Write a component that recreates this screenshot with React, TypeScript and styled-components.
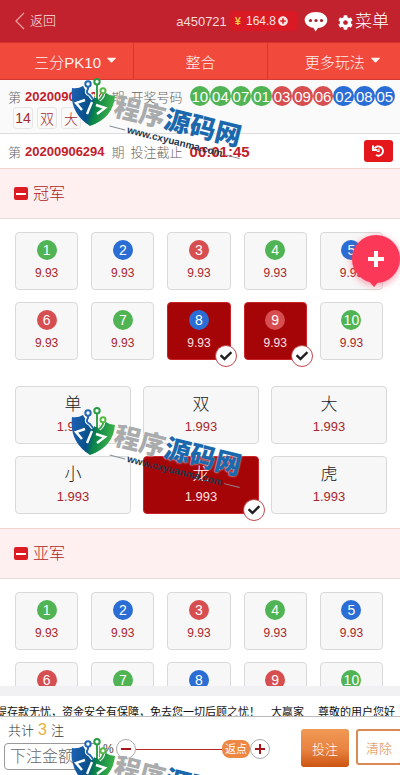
import React, { useState } from "react";
import styled, { createGlobalStyle, css } from "styled-components";
import { FaCog, FaPlusCircle, FaCheck, FaCaretDown } from "react-icons/fa";

const GlobalStyle = createGlobalStyle`
  * { box-sizing: border-box; }
  body { margin: 0; background: #fff; }
  body, button, input { font-family: "Liberation Sans", "Noto Sans CJK SC", sans-serif; font-weight: 300; }
  button { padding: 0; border: 0; background: none; color: inherit; cursor: pointer; }
  h1, h2, p { margin: 0; font-weight: 300; }
`;

type Tone = "green" | "blue" | "red";
const tones: Record<Tone, string> = { green: "#50b454", blue: "#2a6dd4", red: "#d64e50" };
const toneCycle: Tone[] = ["green", "blue", "red"];
const toneOf = (n: number): Tone => toneCycle[(n - 1) % 3];

const Page = styled.div`
  position: relative;
  display: flex;
  flex-direction: column;
  height: 100vh;
  overflow: hidden;
  background: #fff;
`;

const TopBar = styled.header`
  display: flex;
  align-items: center;
  flex: none;
  height: 42px;
  padding: 0 11px 0 14px;
  background: #c1222d;
  color: #fff;
`;

const BackLink = styled.a`
  display: flex;
  align-items: center;
  gap: 4px;
  margin-right: auto;
  color: #fbe3e3;
  font-size: 13px;
  line-height: 18px;
  text-decoration: none;
`;

const Account = styled.span`
  color: #f7dada;
  font-size: 13px;
`;

const Balance = styled.button`
  display: flex;
  align-items: center;
  height: 20px;
  margin: 0 6px 0 3px;
  padding: 0 10px 0 5px;
  border-radius: 5px;
  background: #d91923;
  color: #fbe3e3;
  font-size: 12px;
  gap: 2px;
`;

const Currency = styled.span`
  color: #f5c842;
  font-size: 11px;
  font-weight: 700;
  margin-right: 3px;
`;

const ChatButton = styled.button`
  display: flex;
  margin-right: 10px;
`;

const MenuButton = styled.button`
  display: flex;
  align-items: center;
  gap: 2px;
  padding-top: 2px;
  font-size: 17px;
  line-height: 24px;
`;

const Tabs = styled.nav`
  display: grid;
  grid-template-columns: repeat(3, 1fr);
  flex: none;
  height: 38px;
  border-top: 1px solid #d8322b;
  border-bottom: 1px solid #d43a32;
  background: #f2493d;
`;

const Tab = styled.button<{ $menu?: boolean }>`
  display: flex;
  align-items: center;
  justify-content: center;
  gap: 3px;
  padding-left: ${(p) => (p.$menu ? 20 : 0)}px;
  color: #fff1ee;
  font-size: 15px;
  & + & { border-left: 1px solid #cf3931; }
  svg { margin-top: -4px; }
`;

const DrawPanel = styled.section`
  flex: none;
  height: 54px;
  padding: 6px 5px 0 8px;
  border-bottom: 1px solid #dcdcdc;
  background: #fafafa;
`;

const InfoLine = styled.div`
  display: flex;
  align-items: center;
  height: 20px;
  color: #666;
  font-size: 13px;
  white-space: nowrap;
`;

const Issue = styled.strong`
  margin: 0 7px 0 4px;
  color: #c2202a;
  font-size: 13px;
  font-weight: 700;
`;

const Label = styled.span`
  margin: 0 7px 0 6px;
`;

const Balls = styled.div`
  display: flex;
  flex: 1;
`;

const Ball = styled.span<{ $tone: Tone; $fluid?: boolean }>`
  display: flex;
  align-items: center;
  justify-content: center;
  border-radius: 50%;
  background: ${(p) => tones[p.$tone]};
  color: #fff;
  ${(p) =>
    p.$fluid
      ? css`flex: 1; aspect-ratio: 1; font-size: 15px; max-width: 28px;`
      : css`width: 20px; height: 20px; font-size: 14px;`}
`;

const Chips = styled.div`
  display: flex;
  gap: 4px;
  padding: 1px 5px;
`;

const Chip = styled.span`
  display: flex;
  align-items: center;
  justify-content: center;
  width: 20px;
  height: 22px;
  border: 1px solid #e6e6e6;
  border-radius: 3px;
  color: #a52a2d;
  font-size: 14px;
`;

const CountdownPanel = styled.section`
  display: flex;
  align-items: center;
  justify-content: space-between;
  flex: none;
  height: 34px;
  padding: 0 7px 0 8px;
`;

const Timer = styled.time`
  color: #c2202a;
  font-size: 15px;
  font-weight: 700;
`;

const HistoryButton = styled.button`
  display: flex;
  align-items: center;
  justify-content: center;
  width: 29px;
  height: 22px;
  border-radius: 3px;
  background: #e3171c;
  color: #fff;
`;

const Board = styled.main`
  flex: 1;
  min-height: 0;
  overflow-y: auto;
  scrollbar-width: none;
`;

const SectionTitle = styled.h2`
  display: flex;
  align-items: center;
  gap: 5px;
  height: 51px;
  padding-left: 14px;
  border-top: 1px solid #f3d2d0;
  border-bottom: 1px solid #ead9da;
  background: #fef0f1;
  color: #b01c22;
  font-size: 16px;
  line-height: 20px;
`;

const Toggle = styled.button`
  display: flex;
  align-items: center;
  justify-content: center;
  width: 14px;
  height: 13px;
  border-radius: 2px;
  background: #dc1c22;
  &::before { content: ""; width: 10px; height: 2px; background: #fff; }
`;

const NumberGrid = styled.div`
  display: grid;
  grid-template-columns: repeat(5, 1fr);
  gap: 12px 13px;
  padding: 13px 17px 0 15px;
`;

const PairGrid = styled.div`
  display: grid;
  grid-template-columns: repeat(3, 1fr);
  gap: 12px;
  padding: 26px 13px 14px 15px;
`;

const Cell = styled.button`
  position: relative;
  display: flex;
  flex-direction: column;
  align-items: center;
  height: 58px;
  padding-top: 7px;
  border: 1px solid #d9d9d9;
  border-radius: 4px;
  background: #f7f7f7;
  color: #222;
  &[aria-pressed="true"] {
    border-color: #c8242a;
    background: #a60507;
    color: #fff;
  }
`;

const CellName = styled.span`
  font-size: 17px;
  line-height: 22px;
`;

const Odds = styled.span<{ $large?: boolean }>`
  margin-top: ${(p) => (p.$large ? 2 : 4)}px;
  color: #a8262c;
  font-size: ${(p) => (p.$large ? 13 : 12)}px;
  line-height: 18px;
  [aria-pressed="true"] & { color: #fbe1e1; }
`;

const Tick = styled.span`
  position: absolute;
  right: -7px;
  bottom: -8px;
  display: flex;
  align-items: center;
  justify-content: center;
  width: 22px;
  height: 22px;
  border: 1px solid #c0484c;
  border-radius: 50%;
  background: #fff;
  color: #222;
`;

const FloatingAdd = styled.button`
  position: absolute;
  top: 235px;
  right: 0;
  display: flex;
  align-items: center;
  justify-content: center;
  width: 48px;
  height: 48px;
  border-radius: 50%;
  background: #fb3857;
  color: #fff;
  box-shadow: 0 2px 6px 1px #fb385766;
  &::after {
    content: "";
    position: absolute;
    top: 45px;
    left: 16px;
    border: 6px solid transparent;
    border-top: 7px solid #fb3857;
    border-bottom: 0;
  }
`;

const Ticker = styled.p`
  flex: none;
  height: 31px;
  padding-top: 8px;
  border-top: 10px solid #f1f1f3;
  border-bottom: 1px solid #bbb;
  overflow: hidden;
  color: #111;
  font-size: 11px;
  font-weight: 400;
  line-height: 16px;
  white-space: pre;
  text-indent: -4px;
`;

const BetBar = styled.footer`
  display: flex;
  align-items: flex-start;
  flex: none;
  height: 58px;
  padding-left: 4px;
  overflow: hidden;
`;

const BetForm = styled.div`
  flex: 1;
  min-width: 0;
`;

const Total = styled.p`
  padding: 5px 0 0 4px;
  color: #333;
  font-size: 13px;
  line-height: 16px;
`;

const Count = styled.span`
  margin: 0 4px;
  color: #e2b23e;
  font-size: 16px;
`;

const StakeRow = styled.div`
  display: flex;
  align-items: flex-start;
`;

const StakeInput = styled.input`
  width: 96px;
  height: 27px;
  margin-top: 4px;
  padding: 0 5px;
  border: 1px solid #999;
  border-radius: 4px;
  background: #fff;
  font-size: 16px;
  &::placeholder { color: #666; opacity: 1; }
`;

const Percent = styled.span`
  width: 16px;
  padding-left: 3px;
  color: #444;
  font-size: 12px;
  line-height: 20px;
`;

const StepButton = styled.button`
  display: flex;
  align-items: center;
  justify-content: center;
  flex: none;
  width: 20px;
  height: 20px;
  border: 1px solid #aaa;
  border-radius: 50%;
  color: #a51519;
`;

const SliderBox = styled.div`
  position: relative;
  display: flex;
  align-items: center;
  flex: 1;
  height: 20px;
`;

const Slider = styled.input`
  width: 100%;
  height: 20px;
  margin: 0;
  appearance: none;
  background: linear-gradient(#b3282b, #b3282b) center / 100% 1px no-repeat;
  &::-webkit-slider-thumb {
    appearance: none;
    width: 28px;
    height: 18px;
    border-radius: 8px;
    background: #ed8742;
  }
`;

const ThumbLabel = styled.span`
  position: absolute;
  right: 0;
  width: 28px;
  color: #fff;
  font-size: 11px;
  font-weight: 400;
  line-height: 18px;
  text-align: center;
  pointer-events: none;
`;

const ActionButton = styled.button<{ $primary?: boolean }>`
  flex: none;
  width: ${(p) => (p.$primary ? 48 : 46)}px;
  height: ${(p) => (p.$primary ? 38 : 36)}px;
  margin-top: 12px;
  border-radius: 3px;
  font-size: 13px;
  ${(p) =>
    p.$primary
      ? css`margin-left: 31px; margin-right: 7px; color: #fff; background: linear-gradient(#f09a55, #e98240 55%, #cc5410);`
      : css`margin-right: -2px; color: #dc8440; border: 2px solid #d98a55; background: #fff;`}
`;

const Watermark = styled.div<{ $top: number }>`
  position: absolute;
  top: ${(p) => p.$top}px;
  left: 71px;
  display: flex;
  pointer-events: none;
`;

const WatermarkText = styled.div`
  margin: 15px 0 0 -4px;
  transform: rotate(14deg);
  transform-origin: 0 50%;
  white-space: nowrap;
`;

const WatermarkName = styled.div`
  color: #a9abad;
  font-size: 26px;
  font-weight: 900;
  line-height: 27px;
  text-shadow: 0 0 2px #fff;
  em { color: #1b68ad; font-style: normal; }
`;

const WatermarkUrl = styled.div`
  display: flex;
  align-items: center;
  gap: 2px;
  color: #24384c;
  font-size: 10px;
  font-weight: 700;
  line-height: 12px;
  &::before, &::after { content: ""; width: 16px; height: 1px; background: #8a8f94; }
`;

const Shield = () => (
  <svg width="46" height="49" viewBox="0 0 46 49" aria-hidden="true">
    <defs>
      <linearGradient id="shieldFill" x1="0" x2="1" y1="0.3" y2="0.5">
        <stop offset="0" stopColor="#1c5fb2" />
        <stop offset="0.42" stopColor="#075088" />
        <stop offset="0.56" stopColor="#098249" />
        <stop offset="1" stopColor="#43b749" />
      </linearGradient>
    </defs>
    <path d="M1 10Q7 11 12 8L16 15L22 19L27 19L32 17L35 15Q39 18 44 18Q42 40 19 48Q-2 35 1 10Z" fill="url(#shieldFill)" />
    <path d="M17 8V11Q14 15 19 17L22 21M26 5V20M32 14Q33 18 28 22" fill="none" stroke="#fff" strokeWidth="4" />
    <path d="M17 8V11Q14 15 19 17L22 21" fill="none" stroke="#2468b4" strokeWidth="2" />
    <path d="M26 5V20M32 14Q33 18 28 22" fill="none" stroke="#37a34a" strokeWidth="2" />
    <g fill="#fff" strokeWidth="2">
      <circle cx="17" cy="6" r="2.700" stroke="#2468b4" />
      <circle cx="26" cy="3.700" r="2.700" stroke="#299c45" />
      <circle cx="32" cy="12.700" r="2.500" stroke="#55ba43" />
    </g>
    <path d="M14 22L5 25L11 32M25 27L34 30L26 36M21 24L16 36" fill="none" stroke="#fff" strokeWidth="2.400" />
  </svg>
);

const HistoryIcon = () => (
  <svg width="13" height="12" viewBox="0 0 13 12" fill="none" stroke="currentColor" strokeWidth="2">
    <path d="M2.500 3.500A4.600 4.600 0 1 1 4 10" />
    <path d="M1 0.500V5H5.500" />
    <path d="M7 3.500V6.500H4.800" strokeWidth="1.200" />
  </svg>
);

const draw = [10, 4, 7, 1, 3, 9, 6, 2, 8, 5];
const pairs = ["单", "双", "大", "小", "龙", "虎"];
const numbers = Array.from({ length: 10 }, (_, i) => i + 1);

const TickMark = () => (
  <Tick>
    <FaCheck size={12} />
  </Tick>
);

const Group = ({ title, initial }: { title: string; initial: string[] }) => {
  const [picked, setPicked] = useState(initial);
  const toggle = (k: string) =>
    setPicked((p) => (p.includes(k) ? p.filter((x) => x !== k) : [...p, k]));
  return (
    <section>
      <SectionTitle>
        <Toggle aria-label={`收起${title}`} />
        {title}
      </SectionTitle>
      <NumberGrid>
        {numbers.map((n) => {
          const on = picked.includes(String(n));
          return (
            <Cell key={n} aria-pressed={on} onClick={() => toggle(String(n))}>
              <Ball $tone={toneOf(n)}>{n}</Ball>
              <Odds>9.93</Odds>
              {on && <TickMark />}
            </Cell>
          );
        })}
      </NumberGrid>
      <PairGrid>
        {pairs.map((name) => {
          const on = picked.includes(name);
          return (
            <Cell key={name} aria-pressed={on} onClick={() => toggle(name)}>
              <CellName>{name}</CellName>
              <Odds $large>1.993</Odds>
              {on && <TickMark />}
            </Cell>
          );
        })}
      </PairGrid>
    </section>
  );
};

export default function App() {
  const [rebate, setRebate] = useState(100);
  return (
    <Page>
      <GlobalStyle />
      <TopBar>
        <BackLink href="#">
          <svg width="12" height="18" viewBox="0 0 12 18" fill="none" stroke="#ee9d9f" strokeWidth="1.3">
            <path d="M10 1L2 9l8 8" />
          </svg>
          返回
        </BackLink>
        <Account>a450721</Account>
        <Balance>
          <Currency>¥</Currency> 164.8
          <FaPlusCircle size={10} />
        </Balance>
        <ChatButton aria-label="客服">
          <svg width="24" height="21" viewBox="0 0 24 21">
            <path d="M12 1c6.400 0 11.300 3.500 11.300 8s-4 7.500-9.300 7.900L11.500 20.500 9.500 16.800C4.500 16.200 0.700 13 0.700 9 0.700 4.500 5.600 1 12 1Z" fill="#fff" />
            <g fill="#a91f28">
              <circle cx="6.500" cy="9.500" r="1.600" />
              <circle cx="12" cy="9.500" r="1.600" />
              <circle cx="17.500" cy="9.500" r="1.600" />
            </g>
          </svg>
        </ChatButton>
        <MenuButton>
          <FaCog size={15} />
          菜单
        </MenuButton>
      </TopBar>
      <Tabs>
        <Tab $menu>三分PK10<FaCaretDown size={15} /></Tab>
        <Tab>整合</Tab>
        <Tab $menu>更多玩法<FaCaretDown size={15} /></Tab>
      </Tabs>
      <DrawPanel>
        <InfoLine>
          第<Issue>20200906294</Issue>期<Label>开奖号码</Label>
          <Balls>
            {draw.map((n, i) => (
              <Ball key={n} $fluid $tone={i < 4 ? "green" : i < 7 ? "red" : "blue"}>
                {String(n).padStart(2, "0")}
              </Ball>
            ))}
          </Balls>
        </InfoLine>
        <Chips>
          <Chip>14</Chip>
          <Chip>双</Chip>
          <Chip>大</Chip>
        </Chips>
      </DrawPanel>
      <CountdownPanel>
        <InfoLine>
          第<Issue>20200906294</Issue>期<Label>投注截止</Label>
          <Timer>00:01:45</Timer>
        </InfoLine>
        <HistoryButton aria-label="历史记录">
          <HistoryIcon />
        </HistoryButton>
      </CountdownPanel>
      <Board>
        <Group title="冠军" initial={["8", "9", "龙"]} />
        <Group title="亚军" initial={[]} />
      </Board>
      <Ticker>提存款无忧，资金安全有保障，免去您一切后顾之忧！　大赢家　 尊敬的用户您好</Ticker>
      <BetBar>
        <BetForm>
          <Total>共计<Count>3</Count>注</Total>
          <StakeRow>
            <StakeInput placeholder="下注金额" aria-label="下注金额" />
            <Percent>%</Percent>
            <StepButton aria-label="减少返点" onClick={() => setRebate(Math.max(0, rebate - 1))}>
              <svg width="12" height="12" stroke="currentColor" strokeWidth="2"><path d="M1 6h10" /></svg>
            </StepButton>
            <SliderBox>
              <Slider type="range" aria-label="返点" min={0} max={100} value={rebate} onChange={(e) => setRebate(+e.target.value)} />
              <ThumbLabel style={{ right: `calc((100% - 28px) * ${(100 - rebate) / 100})` }}>返点</ThumbLabel>
            </SliderBox>
            <StepButton aria-label="增加返点" onClick={() => setRebate(Math.min(100, rebate + 1))}>
              <svg width="12" height="12" stroke="currentColor" strokeWidth="2"><path d="M1 6h10M6 1v10" /></svg>
            </StepButton>
          </StakeRow>
        </BetForm>
        <ActionButton $primary>投注</ActionButton>
        <ActionButton>清除</ActionButton>
      </BetBar>
      <FloatingAdd aria-label="添加">
        <svg width="16" height="16" viewBox="0 0 16 16" stroke="currentColor" strokeWidth="4">
          <path d="M0 8h16M8 0v16" />
        </svg>
      </FloatingAdd>
      {[78, 407, 738].map((top) => (
        <Watermark key={top} $top={top}>
          <Shield />
          <WatermarkText>
            <WatermarkName>程序<em>源码网</em></WatermarkName>
            <WatermarkUrl>www.cxyuanma.com</WatermarkUrl>
          </WatermarkText>
        </Watermark>
      ))}
    </Page>
  );
}
